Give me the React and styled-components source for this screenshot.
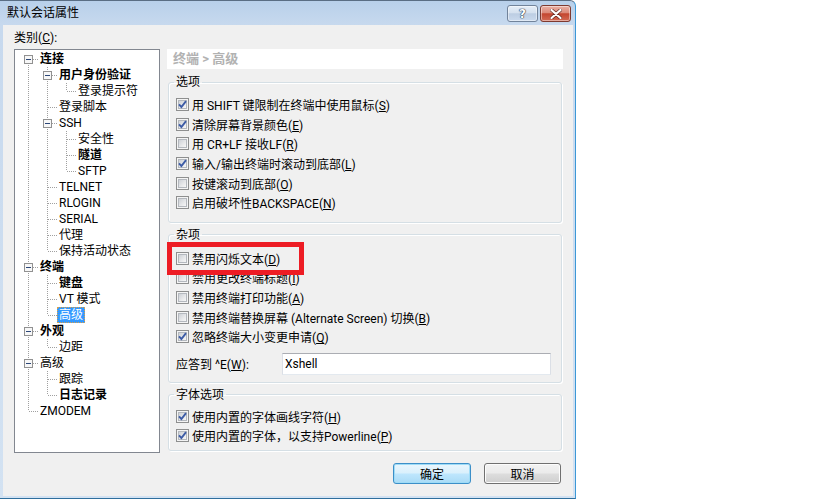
import React from "react";
import styled, { createGlobalStyle } from "styled-components";

const GlobalStyle = createGlobalStyle`
  html, body {
    margin: 0;
    padding: 0;
    background: #fff;
  }
  body {
    font-family: Roboto, "Noto Sans CJK SC", "Microsoft YaHei", sans-serif;
    font-size: 12px;
    color: #000;
  }
`;

const Window = styled.div`
  position: relative;
  width: 576px;
  height: 499px;
  box-sizing: border-box;
  display: flex;
  flex-direction: column;
  border-top: 1px solid #5a6e84;
  border-right: 1px solid #3d98d6;
  border-bottom: 1px solid #2f6e9c;
  border-top-right-radius: 6px;
  background: linear-gradient(180deg, #b8d0ea 0, #c7d9ee 24px, #d3e2f2 100%);
`;

const TitleBar = styled.div`
  height: 24px;
  flex: none;
  display: flex;
  align-items: flex-start;
  padding: 0 4px 0 7px;
`;

const Title = styled.div`
  flex: 1;
  line-height: 24px;
  font-size: 12px;
  color: #000;
`;

const CaptionButtons = styled.div`
  display: flex;
  gap: 2px;
  margin-top: 4px;
`;

const CaptionButton = styled.div`
  width: 31px;
  height: 17px;
  box-sizing: border-box;
  border-radius: 3px;
  display: flex;
  align-items: center;
  justify-content: center;
  border: 1px solid ${(p) => (p.$close ? "#7e3a30" : "#71839a")};
  background: ${(p) =>
    p.$close
      ? "linear-gradient(180deg, #eab0a4 0%, #dc8a79 45%, #c4462f 52%, #d36b55 100%)"
      : "linear-gradient(180deg, #e6eef7 0%, #d5e1ef 45%, #bccde2 52%, #cadaee 100%)"};
  box-shadow: inset 0 0 0 1px rgba(255, 255, 255, 0.45);
`;

const HelpGlyph = styled.span`
  font-family: "DejaVu Sans", sans-serif;
  font-weight: 700;
  font-size: 12px;
  line-height: 12px;
  color: #fff;
  text-shadow: 0 0 1px #1f2f44, 0 0 1px #1f2f44, 0 0 1px #1f2f44;
`;

const Client = styled.div`
  flex: 1;
  margin: 0 2px 2px 3px;
  background: #f0f0f0;
  padding: 5px 10px 0 11px;
  display: flex;
  flex-direction: column;
`;

const MainGrid = styled.div`
  display: grid;
  grid-template-columns: 146px 396px;
  grid-template-rows: 16px 404px;
  column-gap: 7px;
  row-gap: 3px;
`;

const CategoryLabel = styled.div`
  line-height: 16px;
`;

const TreeBox = styled.div`
  grid-row: 2;
  box-sizing: border-box;
  border: 1px solid #828790;
  background: #fff;
  padding: 1px 0 0 4px;
  overflow: hidden;
`;

const TreeRow = styled.div`
  height: 16px;
  display: flex;
  align-items: stretch;
`;

const NodeLabel = styled.span`
  padding: 0 1px;
  line-height: 14px;
  border: 1px dotted ${(p) => (p.$selected ? "#d9a04c" : "transparent")};
  background: ${(p) => (p.$selected ? "#3399ff" : "transparent")};
  color: ${(p) => (p.$selected ? "#fff" : "#000")};
  font-weight: ${(p) => (p.$bold ? 700 : 400)};
  white-space: nowrap;
`;

const Panel = styled.div`
  grid-row: 2;
  display: flex;
  flex-direction: column;
`;

const PanelHeader = styled.div`
  height: 20px;
  line-height: 20px;
  background: #fff;
  padding-left: 6px;
  font-size: 13px;
  font-weight: 700;
  color: #b2b2b2;
`;

const Group = styled.fieldset`
  margin: ${(p) => p.$top}px 1px 0;
  padding: ${(p) => p.$pt}px 0 ${(p) => p.$pb}px 7px;
  border: 1px solid #d5dfe5;
  border-radius: 3px;
  box-shadow: inset 1px 1px 0 #fff, 1px 1px 0 #fff;
  min-width: 0;
`;

const Legend = styled.legend`
  padding: 0 2px;
  margin-left: -2px;
  line-height: 16px;
`;

const CheckRow = styled.div`
  height: 19.6px;
  display: flex;
  align-items: center;
  gap: 3px;
  white-space: nowrap;
`;

const Box = styled.span`
  flex: none;
  width: 13px;
  height: 13px;
  box-sizing: border-box;
  border: 1px solid #8e8f8f;
  background: #f4f4f4;
  padding: 1px;
  display: flex;
`;

const BoxInner = styled.span`
  flex: 1;
  border: 1px solid #b4b8be;
  background: linear-gradient(135deg, #cdd1d6 0%, #e6e7e9 55%, #f7f7f7 100%);
  display: flex;
`;

const InputRow = styled.div`
  display: flex;
  align-items: center;
  margin-top: 6px;
  height: 22px;
`;

const InputLabel = styled.span`
  width: 106px;
  flex: none;
`;

const TextInput = styled.input`
  width: 269px;
  height: 22px;
  box-sizing: border-box;
  border: 1px solid #dbdfe6;
  border-top-color: #abadb3;
  border-bottom-color: #e3e9ef;
  padding: 0 2px;
  font: inherit;
  font-size: 12px;
  color: #000;
  background: #fff;
  outline: none;
`;

const Footer = styled.div`
  display: flex;
  justify-content: flex-end;
  gap: 13px;
  margin-top: 10px;
  padding-right: 2px;
`;

const Button = styled.div`
  width: ${(p) => (p.$default ? 78 : 77)}px;
  height: 21px;
  box-sizing: border-box;
  border-radius: 3px;
  display: flex;
  align-items: center;
  justify-content: center;
  border: 1px solid ${(p) => (p.$default ? "#3c8fc8" : "#707070")};
  background: ${(p) =>
    p.$default
      ? "linear-gradient(180deg, #eaf6fd 0%, #d9f0fc 48%, #bee6fd 52%, #a9dbf6 100%)"
      : "linear-gradient(180deg, #f2f2f2 0%, #ebebeb 48%, #dddddd 52%, #cfcfcf 100%)"};
  box-shadow: inset 0 0 0 1px ${(p) => (p.$default ? "#9fdcf7" : "#fcfcfc")};
`;

const Annotation = styled.div`
  position: absolute;
  left: 167px;
  top: 241px;
  width: 137px;
  height: 33px;
  box-sizing: border-box;
  border: 5px solid #ed1c24;
  pointer-events: none;
`;

const tree = [
  {
    label: "连接",
    bold: true,
    children: [
      { label: "用户身份验证", bold: true, children: [{ label: "登录提示符" }] },
      { label: "登录脚本" },
      {
        label: "SSH",
        children: [{ label: "安全性" }, { label: "隧道", bold: true }, { label: "SFTP" }],
      },
      { label: "TELNET" },
      { label: "RLOGIN" },
      { label: "SERIAL" },
      { label: "代理" },
      { label: "保持活动状态" },
    ],
  },
  {
    label: "终端",
    bold: true,
    children: [
      { label: "键盘", bold: true },
      { label: "VT 模式" },
      { label: "高级", selected: true },
    ],
  },
  { label: "外观", bold: true, children: [{ label: "边距" }] },
  { label: "高级", children: [{ label: "跟踪" }, { label: "日志记录", bold: true }] },
  { label: "ZMODEM" },
];

function flatten(nodes, guides = [], out = []) {
  nodes.forEach((n, i) => {
    const last = i === nodes.length - 1;
    const first = guides.length === 0 && i === 0;
    out.push({ ...n, guides, last, first, hasKids: !!n.children });
    if (n.children) flatten(n.children, [...guides, !last], out);
  });
  return out;
}

const rows = flatten(tree);

const DOT = "#a0a0a0";

function GuideCell({ on }) {
  return (
    <svg width="19" height="16" shapeRendering="crispEdges">
      {on && <line x1="9.5" y1="0" x2="9.5" y2="16" stroke={DOT} strokeDasharray="1 1" />}
    </svg>
  );
}

function NodeCell({ first, last, hasKids }) {
  return (
    <svg width="19" height="16" shapeRendering="crispEdges">
      {!first && <line x1="9.5" y1="0" x2="9.5" y2="8" stroke={DOT} strokeDasharray="1 1" />}
      {!last && <line x1="9.5" y1="8" x2="9.5" y2="16" stroke={DOT} strokeDasharray="1 1" />}
      <line x1="10" y1="8.5" x2="19" y2="8.5" stroke={DOT} strokeDasharray="1 1" />
      {hasKids && (
        <>
          <rect x="5.5" y="4.5" width="8" height="8" fill="#f7f7f7" stroke="#919191" />
          <line x1="7" y1="8.5" x2="12" y2="8.5" stroke="#2c4778" />
        </>
      )}
    </svg>
  );
}

function Check({ checked }) {
  return (
    <Box>
      <BoxInner>
        {checked && (
          <svg width="7" height="7" viewBox="0 0 7 7" style={{ overflow: "visible" }}>
            <path d="M0 3.4 L2.4 6 L7 0.2" fill="none" stroke="#3d5ca6" strokeWidth="1.9" />
          </svg>
        )}
      </BoxInner>
    </Box>
  );
}

function Mn({ text, k, tail = "" }) {
  return (
    <span>
      {text}(<u>{k}</u>){tail}
    </span>
  );
}

function Option({ checked, text, k, tail }) {
  return (
    <CheckRow>
      <Check checked={checked} />
      <Mn text={text} k={k} tail={tail} />
    </CheckRow>
  );
}

const options = [
  { checked: true, text: "用 SHIFT 键限制在终端中使用鼠标", k: "S" },
  { checked: true, text: "清除屏幕背景颜色", k: "E" },
  { checked: false, text: "用 CR+LF 接收LF", k: "R" },
  { checked: true, text: "输入/输出终端时滚动到底部", k: "L" },
  { checked: false, text: "按键滚动到底部", k: "O" },
  { checked: false, text: "启用破坏性BACKSPACE", k: "N" },
];

const misc = [
  { checked: false, text: "禁用闪烁文本", k: "D" },
  { checked: false, text: "禁用更改终端标题", k: "I" },
  { checked: false, text: "禁用终端打印功能", k: "A" },
  { checked: false, text: "禁用终端替换屏幕 (Alternate Screen) 切换", k: "B" },
  { checked: true, text: "忽略终端大小变更申请", k: "Q" },
];

const fonts = [
  { checked: true, text: "使用内置的字体画线字符", k: "H" },
  { checked: true, text: "使用内置的字体，以支持Powerline", k: "P" },
];

export default function App() {
  return (
    <>
      <GlobalStyle />
      <Window>
        <TitleBar>
          <Title>默认会话属性</Title>
          <CaptionButtons>
            <CaptionButton>
              <HelpGlyph>?</HelpGlyph>
            </CaptionButton>
            <CaptionButton $close>
              <svg width="12" height="10" viewBox="0 0 12 10">
                <path d="M1.5 1 L10.5 9 M10.5 1 L1.5 9" stroke="#4a1d16" strokeWidth="3.6" strokeLinecap="round" opacity="0.75" />
                <path d="M1.5 1 L10.5 9 M10.5 1 L1.5 9" stroke="#fff" strokeWidth="2.2" strokeLinecap="round" />
              </svg>
            </CaptionButton>
          </CaptionButtons>
        </TitleBar>

        <Client>
          <MainGrid>
            <CategoryLabel>
              <Mn text="类别" k="C" tail=":" />
            </CategoryLabel>
            <div />
            <TreeBox>
              {rows.map((r, i) => (
                <TreeRow key={i}>
                  {r.guides.map((on, j) => (
                    <GuideCell key={j} on={on} />
                  ))}
                  <NodeCell first={r.first} last={r.last} hasKids={r.hasKids} />
                  <NodeLabel $bold={r.bold} $selected={r.selected}>
                    {r.label}
                  </NodeLabel>
                </TreeRow>
              ))}
            </TreeBox>

            <Panel>
              <PanelHeader>终端 &gt; 高级</PanelHeader>

              <Group $top={5} $pt={5} $pb={9}>
                <Legend>选项</Legend>
                {options.map((o) => (
                  <Option key={o.k} {...o} />
                ))}
              </Group>

              <Group $top={4} $pt={6} $pb={7}>
                <Legend>杂项</Legend>
                {misc.map((o) => (
                  <Option key={o.k} {...o} />
                ))}
                <InputRow>
                  <InputLabel>
                    <Mn text="应答到 ^E" k="W" tail=":" />
                  </InputLabel>
                  <TextInput readOnly value="Xshell" />
                </InputRow>
              </Group>

              <Group $top={4} $pt={4} $pb={4}>
                <Legend>字体选项</Legend>
                {fonts.map((o) => (
                  <Option key={o.k} {...o} />
                ))}
              </Group>
            </Panel>
          </MainGrid>

          <Footer>
            <Button $default>确定</Button>
            <Button>取消</Button>
          </Footer>
        </Client>

        <Annotation />
      </Window>
    </>
  );
}
